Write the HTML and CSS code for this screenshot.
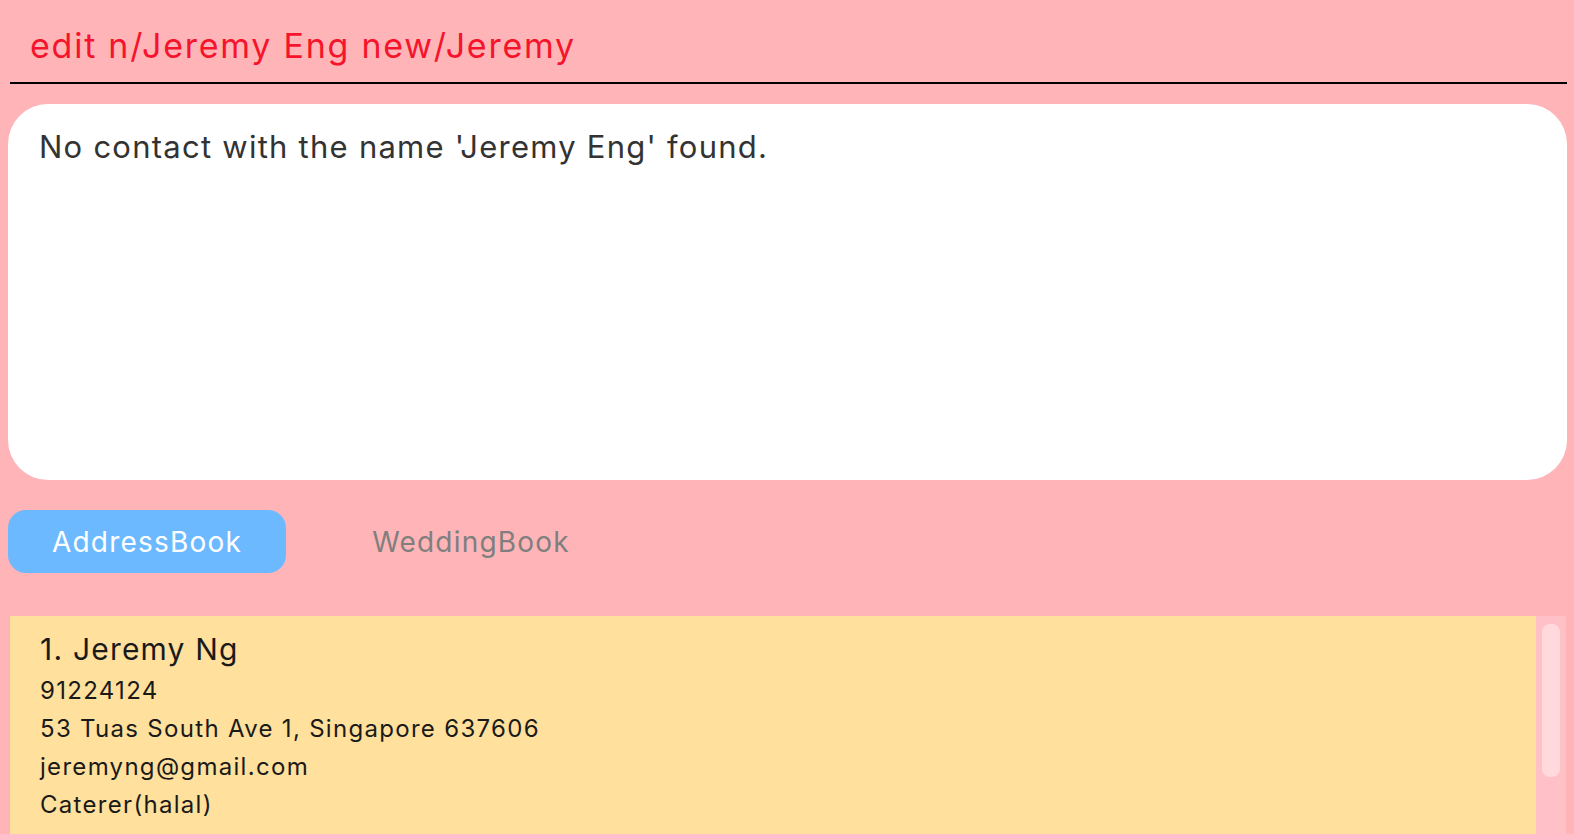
FILE: index.html
```html
<!DOCTYPE html>
<html>
<head>
<meta charset="utf-8">
<link rel="stylesheet" href="styles.css">
</head>
<body>
<div class="app">
  <div class="command">edit n/Jeremy Eng new/Jeremy</div>
  <div class="result">No contact with the name 'Jeremy Eng' found.</div>
  <div class="tabs">
    <div class="tab active">AddressBook</div>
    <div class="tab">WeddingBook</div>
  </div>
  <div class="list">
    <div class="cards">
      <div class="card">
        <div class="name">1. Jeremy Ng</div>
        <div class="line">91224124</div>
        <div class="line">53 Tuas South Ave 1, Singapore 637606</div>
        <div class="line">jeremyng@gmail.com</div>
        <div class="line">Caterer(halal)</div>
      </div>
    </div>
    <div class="scrollbar"><div class="thumb"></div></div>
  </div>
</div>
</body>
</html>
```
FILE: styles.css
```css
html, body {
  margin: 0;
  padding: 0;
  background: #ffb5b8;
  overflow: hidden;
}
body {
  font-family: Inter, "Noto Sans", sans-serif;
  width: 1574px;
  height: 834px;
}
.app {
  display: flex;
  flex-direction: column;
}
.command {
  margin: 0 7px 0 10px;
  height: 84px;
  box-sizing: border-box;
  padding: 22px 0 0 20px;
  border-bottom: 2px solid #000;
  color: #f5142b;
  font-size: 34px;
  line-height: 48px;
  letter-spacing: 1.75px;
}
.result {
  margin: 20px 7px 0 8px;
  height: 376px;
  box-sizing: border-box;
  background: #fff;
  border-radius: 40px;
  padding: 21px 31px;
  color: #333;
  font-size: 31px;
  line-height: 44px;
  letter-spacing: 1.25px;
}
.tabs {
  display: flex;
  margin: 30px 0 0 8px;
}
.tab {
  height: 63px;
  width: 278px;
  border-radius: 18px;
  display: flex;
  align-items: center;
  justify-content: center;
  font-size: 28px;
  letter-spacing: 1.2px;
  color: #7f7f7f;
}
.tab.active {
  background: #6cb9ff;
  color: #fff;
}
.tab + .tab {
  width: 370px;
}
.list {
  display: flex;
  margin: 43px 8px 0 10px;
  height: 220px;
}
.cards {
  flex: 1;
  background: #ffe09c;
}
.card {
  padding: 13px 30px;
  color: #1a1a1a;
}
.name {
  font-size: 30px;
  line-height: 40px;
  letter-spacing: 1.2px;
  margin-bottom: 3px;
}
.line {
  font-size: 24px;
  line-height: 38px;
  letter-spacing: 1.3px;
}
.scrollbar {
  width: 30px;
  background: #ffc1c7;
  padding: 8px 6px 0 6px;
  box-sizing: border-box;
}
.thumb {
  height: 153px;
  background: #ffd9dc;
  border-radius: 8px;
}
```
